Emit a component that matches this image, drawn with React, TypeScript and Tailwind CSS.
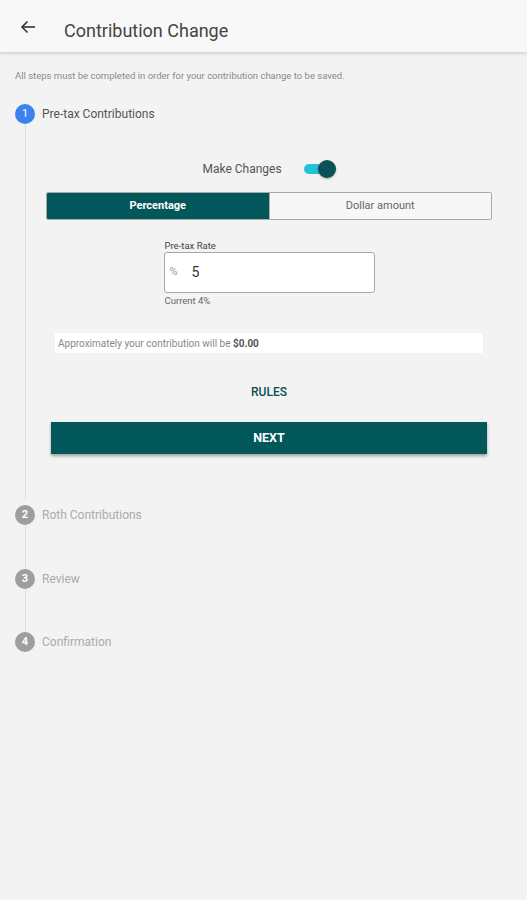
import React from "react";

function StepCircle({ n, active }: { n: number; active?: boolean }) {
  return (
    <div
      className={
        active
          ? "w-[20px] h-[20px] rounded-full bg-[#3b82f0] text-white text-[11px] flex items-center justify-center shrink-0"
          : "w-[20px] h-[20px] rounded-full bg-[#9e9e9e] text-white text-[11px] font-bold flex items-center justify-center shrink-0"
      }
    >
      {n}
    </div>
  );
}

export default function App() {
  return (
    <div
      className="w-[527px] h-[900px] bg-[#f3f3f3] overflow-hidden"
      style={{ fontFamily: "Roboto, 'Noto Sans', sans-serif" }}
    >
      <div className="h-[53px] bg-[#f8f8f8] border-b border-[#d6d6d6] shadow-[0_1px_3px_rgba(0,0,0,0.12)] flex items-center">
        <div className="w-[64px] flex items-center pl-[20px] mt-[2px]">
          <svg width="16" height="16" viewBox="0 0 16 16" fill="none" stroke="#333" strokeWidth="1.6">
            <path d="M15 8H2" />
            <path d="M7.5 2.5L2 8l5.5 5.5" />
          </svg>
        </div>
        <div className="text-[18px] text-[#444] mt-[8px]">Contribution Change</div>
      </div>

      <div className="pl-[15px] mt-[16px] text-[9.5px] leading-[14px] text-[#8a8a8a]">
        All steps must be completed in order for your contribution change to be saved.
      </div>

      <div className="mt-[21px] flex items-center pl-[15px] h-[20px]">
        <StepCircle n={1} active />
        <div className="ml-[7px] text-[12px] text-[#555]">Pre-tax Contributions</div>
      </div>

      <div className="ml-[25px] border-l border-[#e0e0e0] pl-[20px] pr-[35px] pt-[36px] pb-[46px]">
        <div className="flex items-center justify-center gap-[22px] h-[18px]">
          <div className="text-[12px] text-[#555]">Make Changes</div>
          <div className="relative w-[32px] h-[18px] flex items-center">
            <div className="w-[28px] h-[10px] rounded-full bg-[#22c3d6]" />
            <div className="absolute right-0 top-0 w-[18px] h-[18px] rounded-full bg-[#0b5256] shadow-[0_1px_2px_rgba(0,0,0,0.3)]" />
          </div>
        </div>

        <div className="mt-[14px] flex h-[28px] border border-[#a8a8a8] rounded-[2px] overflow-hidden">
          <div className="flex-1 bg-[#02575a] text-white text-[11px] font-bold flex items-center justify-center">
            Percentage
          </div>
          <div className="flex-1 bg-[#f7f7f7] border-l border-[#a8a8a8] text-[#666] text-[11px] flex items-center justify-center">
            Dollar amount
          </div>
        </div>

        <div className="mt-[20px] w-[211px] mx-auto">
          <div className="text-[9.5px] leading-[12px] text-[#444] pl-[1px]">Pre-tax Rate</div>
          <div className="h-[41px] bg-white border border-[#a8a8a8] rounded-[3px] flex items-center px-[5px]">
            <span className="text-[11px] text-[#999]">%</span>
            <span className="ml-[14px] text-[14px] text-[#333]">5</span>
          </div>
          <div className="text-[9.5px] leading-[13px] text-[#666] pl-[1px] mt-[1px]">Current 4%</div>
        </div>

        <div className="mt-[26px] mx-[9px] h-[20px] bg-white flex items-center px-[3px] text-[10px] text-[#888]">
          Approximately your contribution will be&nbsp;
          <span className="font-bold text-[#555]">$0.00</span>
        </div>

        <div className="mt-[30px] text-center text-[12px] font-medium text-[#0d4f52] leading-[18px]">RULES</div>

        <div className="mt-[21px] mx-[5px] h-[32px] bg-[#02575a] shadow-[0_2px_3px_rgba(0,0,0,0.35)] flex items-center justify-center text-white text-[12.5px] font-bold">
          NEXT
        </div>
      </div>

      <div className="flex items-center pl-[15px] h-[20px] mt-[5px]">
        <StepCircle n={2} />
        <div className="ml-[7px] text-[12px] text-[#aaa]">Roth Contributions</div>
      </div>
      <div className="ml-[25px] border-l border-[#e0e0e0] h-[44px]" />
      <div className="flex items-center pl-[15px] h-[20px]">
        <StepCircle n={3} />
        <div className="ml-[7px] text-[12px] text-[#aaa]">Review</div>
      </div>
      <div className="ml-[25px] border-l border-[#e0e0e0] h-[43px]" />
      <div className="flex items-center pl-[15px] h-[20px]">
        <StepCircle n={4} />
        <div className="ml-[7px] text-[12px] text-[#aaa]">Confirmation</div>
      </div>
    </div>
  );
}
